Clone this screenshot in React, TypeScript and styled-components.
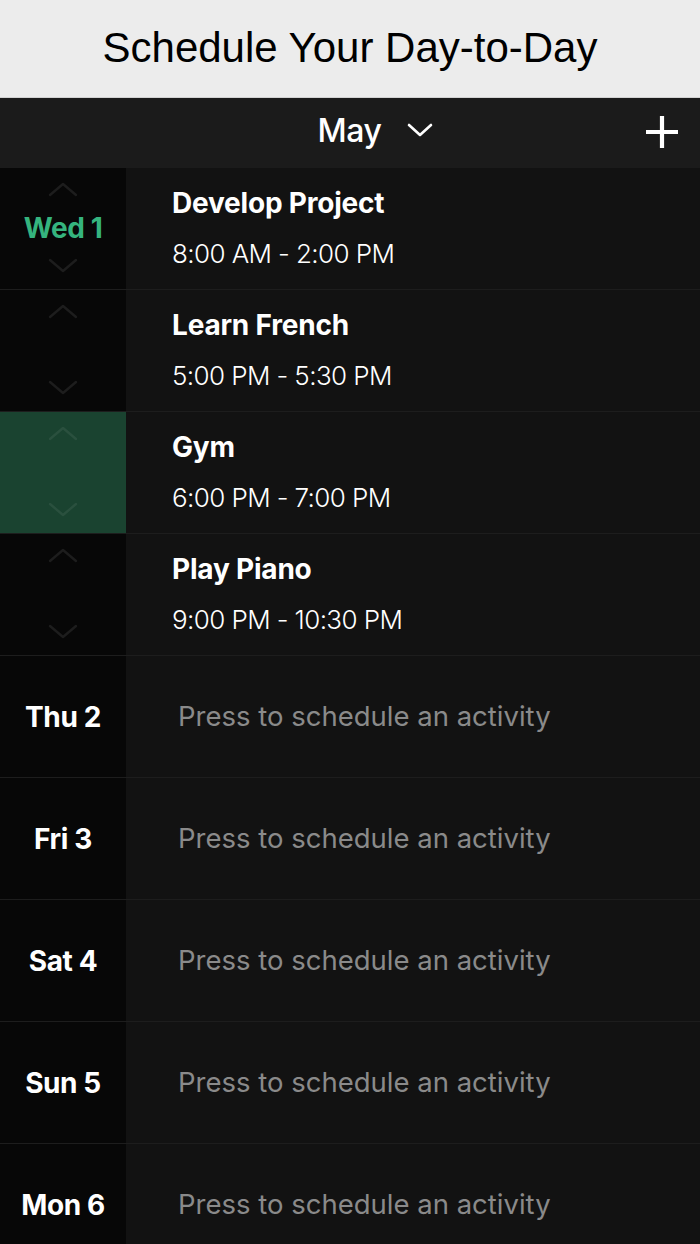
import React from 'react';
import styled, { createGlobalStyle } from 'styled-components';

const GlobalStyle = createGlobalStyle`
  html, body {
    margin: 0;
    padding: 0;
    background: #121212;
  }
  * {
    box-sizing: border-box;
  }
`;

type Task = { title: string; time: string };
type Day = { label: string; tasks: Task[] };

const days: Day[] = [
  {
    label: 'Wed 1',
    tasks: [
      { title: 'Develop Project', time: '8:00 AM - 2:00 PM' },
      { title: 'Learn French', time: '5:00 PM - 5:30 PM' },
      { title: 'Gym', time: '6:00 PM - 7:00 PM' },
      { title: 'Play Piano', time: '9:00 PM - 10:30 PM' },
    ],
  },
  { label: 'Thu 2', tasks: [] },
  { label: 'Fri 3', tasks: [] },
  { label: 'Sat 4', tasks: [] },
  { label: 'Sun 5', tasks: [] },
  { label: 'Mon 6', tasks: [] },
];

// the selected activity (Gym) gets the green day cell
const SELECTED = 'Gym';

const Chevron: React.FC<{ up?: boolean }> = ({ up }) => (
  <ChevronSvg viewBox="0 0 30 15" width={30} height={15}>
    <polyline
      points={up ? '2,13 15,2 28,13' : '2,2 15,13 28,2'}
      fill="none"
      stroke="currentColor"
      strokeWidth={2.4}
      strokeLinecap="round"
      strokeLinejoin="round"
    />
  </ChevronSvg>
);

const App: React.FC = () => {
  return (
    <>
      <GlobalStyle />
      <Page>
        <Header>
          <HeaderTitle>Schedule Your Day-to-Day</HeaderTitle>
        </Header>
        <NavBar>
          <span />
          <MonthPicker>
            <MonthName>May</MonthName>
            <svg viewBox="0 0 26 16" width={26} height={16}>
              <polyline
                points="2,3 13,13 24,3"
                fill="none"
                stroke="#fff"
                strokeWidth={2.6}
                strokeLinecap="round"
                strokeLinejoin="round"
              />
            </svg>
          </MonthPicker>
          <AddButton aria-label="Add">
            <svg viewBox="0 0 32 32" width={32} height={32}>
              <path d="M16 2V30M2 16H30" stroke="#fff" strokeWidth={4.2} strokeLinecap="square" />
            </svg>
          </AddButton>
        </NavBar>
        <List>
          {days.map((day) =>
            day.tasks.length === 0 ? (
              <Row key={day.label}>
                <DayCell>
                  <DayLabel>{day.label}</DayLabel>
                </DayCell>
                <Placeholder>Press to schedule an activity</Placeholder>
              </Row>
            ) : (
              day.tasks.map((task, i) => (
                <Row key={task.title}>
                  <DayCell $selected={task.title === SELECTED} $stacked>
                    <Chevron up />
                    {i === 0 ? <DayLabel $today>{day.label}</DayLabel> : <span />}
                    <Chevron />
                  </DayCell>
                  <TaskInfo>
                    <TaskTitle>{task.title}</TaskTitle>
                    <TaskTime>{task.time}</TaskTime>
                  </TaskInfo>
                </Row>
              ))
            )
          )}
        </List>
      </Page>
    </>
  );
};

const Page = styled.div`
  width: 100%;
  min-height: 100vh;
  background: #121212;
  font-family: Inter, Roboto, 'Noto Sans', sans-serif;
`;

const Header = styled.header`
  height: 98px;
  display: flex;
  align-items: center;
  justify-content: center;
  background: #ececec;
  border-bottom: 1px solid #d2d2d2;
`;

const HeaderTitle = styled.h1`
  margin: 0 0 2px;
  font-family: 'Liberation Sans', Arial, sans-serif;
  font-weight: 400;
  font-size: 42px;
  letter-spacing: 0;
  color: #000;
`;

const NavBar = styled.nav`
  height: 70px;
  display: grid;
  grid-template-columns: 1fr auto 1fr;
  align-items: center;
  background: #1b1b1b;
  padding: 0 22px 6px;
`;

const MonthPicker = styled.div`
  display: flex;
  align-items: center;
  gap: 25px;
  padding-left: 50px;
`;

const MonthName = styled.span`
  font-size: 32px;
  font-weight: 500;
  color: #fff;
  letter-spacing: -0.4px;
`;

const AddButton = styled.button`
  justify-self: end;
  display: flex;
  padding: 0;
  margin-top: 4px;
  border: none;
  background: none;
`;

const List = styled.main`
  display: flex;
  flex-direction: column;
`;

const Row = styled.div`
  height: 122px;
  display: grid;
  grid-template-columns: 126px 1fr;
  border-bottom: 1px solid #1d1d1d;
  background: #121212;
`;

const DayCell = styled.div<{ $selected?: boolean; $stacked?: boolean }>`
  display: flex;
  flex-direction: column;
  align-items: center;
  justify-content: ${(p) => (p.$stacked ? 'space-between' : 'center')};
  padding: ${(p) => (p.$stacked ? '14px 0 16px' : '0')};
  background: ${(p) => (p.$selected ? '#1a4330' : '#070707')};
  color: ${(p) => (p.$selected ? 'rgba(255,255,255,0.07)' : '#1d1d1d')};
`;

const ChevronSvg = styled.svg`
  display: block;
`;

const DayLabel = styled.span<{ $today?: boolean }>`
  font-size: 28px;
  font-weight: 700;
  letter-spacing: -0.4px;
  color: ${(p) => (p.$today ? '#35b47e' : '#fff')};
`;

const TaskInfo = styled.div`
  display: flex;
  flex-direction: column;
  padding: 18px 0 0 46px;
  gap: 17px;
`;

const TaskTitle = styled.span`
  font-size: 28px;
  font-weight: 700;
  line-height: 34px;
  letter-spacing: -0.2px;
  color: #fff;
`;

const TaskTime = styled.span`
  font-size: 26px;
  font-weight: 300;
  line-height: 34px;
  letter-spacing: -0.6px;
  color: #fff;
`;

const Placeholder = styled.div`
  display: flex;
  align-items: center;
  padding: 0 0 2px 52px;
  font-size: 27.5px;
  font-weight: 400;
  letter-spacing: 0;
  color: #8a8a8a;
`;

export default App;
